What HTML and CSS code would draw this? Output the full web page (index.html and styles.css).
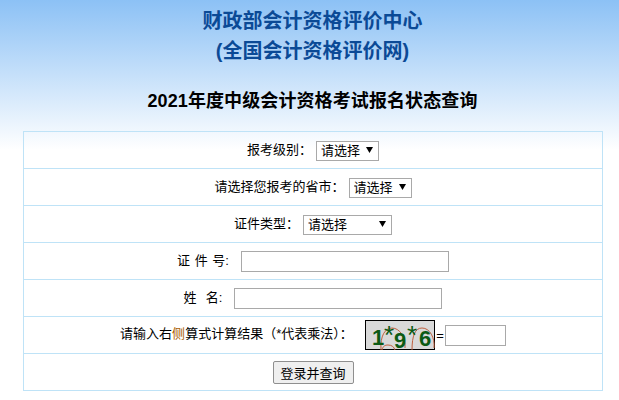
FILE: index.html
```html
<!DOCTYPE html>
<html lang="zh-CN">
<head>
<meta charset="utf-8">
<title>2021年度中级会计资格考试报名状态查询</title>
<link rel="stylesheet" href="styles.css">
</head>
<body>
<header class="head">
  <h1 class="org">财政部会计资格评价中心<br>(全国会计资格评价网)</h1>
  <h2 class="title">2021年度中级会计资格考试报名状态查询</h2>
</header>
<form class="form-wrap">
<table class="form">
  <tr><td>报考级别：<select class="sel sel-a"><option>请选择</option></select></td></tr>
  <tr><td>请选择您报考的省市：<select class="sel sel-a"><option>请选择</option></select></td></tr>
  <tr><td>证件类型：<select class="sel sel-b"><option>请选择</option></select></td></tr>
  <tr><td><span class="lbl">证 件 号:</span><input class="txt" type="text"></td></tr>
  <tr><td><span class="lbl">姓&nbsp; 名:</span><input class="txt" type="text"></td></tr>
  <tr><td class="cap-cell">
    <span>请输入右<span class="hl">侧</span>算式计算结果（*代表乘法）：</span>
    <svg class="captcha" width="70" height="30" viewBox="0 0 70 30">
      <rect x="0.5" y="0.5" width="69" height="29" fill="#d9d9d9" stroke="#000"/>
      <g fill="none" stroke="#c0603f" stroke-width="1">
        <path d="M16 30C15 16 20 8 27 8C35 8 41 18 40 28"/>
        <path d="M17 30C18 26 20 25 23 25C27 25 29 27 30 30"/>
        <path d="M47 30C47 16 50 8 57 8C65 8 70 18 69 28"/>
      </g>
      <text class="cap-num" x="7" y="25">1<tspan class="cap-star" x="19" y="24">*</tspan><tspan x="29" y="28">9</tspan><tspan class="cap-star" x="42" y="24">*</tspan><tspan x="54" y="26">6</tspan></text>
    </svg><span class="eq">=</span><input class="txt txt-s" type="text">
  </td></tr>
  <tr><td><button class="btn" type="button">登录并查询</button></td></tr>
</table>
</form>
</body>
</html>
```

FILE: styles.css
```css
html, body { margin: 0; padding: 0; }
body {
  height: 400px;
  overflow: hidden;
  background: linear-gradient(to bottom, #8cc1f5 0, #ffffff 150px) no-repeat;
  background-color: #fff;
  font-family: "Liberation Sans", "Noto Sans CJK SC", sans-serif;
  font-size: 13px;
  color: #000;
}
.head { margin-left: 6px; text-align: center; }
.org {
  margin: 0;
  padding-top: 6px;
  font-size: 20px;
  line-height: 30px;
  font-weight: bold;
  color: #0b4a96;
}
.title {
  margin: 0;
  padding-top: 22px;
  font-size: 18px;
  line-height: 26px;
  font-weight: bold;
  letter-spacing: 0.1px;
  height: 43px;
}
.form-wrap { display: block; margin: 0 0 0 23px; }
.form {
  width: 580px;
  border-collapse: collapse;
  table-layout: fixed;
}
.form td {
  height: 36px;
  padding: 0;
  text-align: center;
  vertical-align: middle;
  border: 1px solid #bfe3f7;
}
.sel {
  appearance: none;
  -webkit-appearance: none;
  height: 20px;
  box-sizing: border-box;
  margin-left: 4px;
  padding: 0 0 0 4px;
  font: inherit;
  color: #000;
  border: 1px solid #a9a9a9;
  border-radius: 0;
  vertical-align: middle;
  background: #fff url("data:image/svg+xml,%3Csvg xmlns='http://www.w3.org/2000/svg' width='7' height='6'%3E%3Cpath d='M0 0H7L3.500 6Z' fill='%23000'/%3E%3C/svg%3E") no-repeat right 5px top 5px;
}
.sel-a { width: 63px; }
.sel-b { width: 89px; }
.lbl { margin-right: 12px; word-spacing: 1px; }
.txt {
  width: 208px;
  height: 21px;
  box-sizing: border-box;
  padding: 0 2px;
  border: 1px solid #a9a9a9;
  background: #fff;
  vertical-align: middle;
}
.txt-s { width: 61px; }
.captcha { vertical-align: middle; margin-left: 9px; overflow: visible; }
.cap-num {
  font-family: "Liberation Sans", sans-serif;
  font-size: 22px;
  font-weight: bold;
  fill: #0b5a14;
}
.cap-star { font-size: 26px; font-weight: normal; }
.eq { vertical-align: middle; margin: 0 1px; }
.hl { color: #a85a00; }
.btn {
  width: 81px;
  height: 23px;
  box-sizing: border-box;
  padding: 0;
  font: inherit;
  color: #000;
  background: #efefef;
  border: 1px solid #8f8f8f;
  border-radius: 2px;
}
```
